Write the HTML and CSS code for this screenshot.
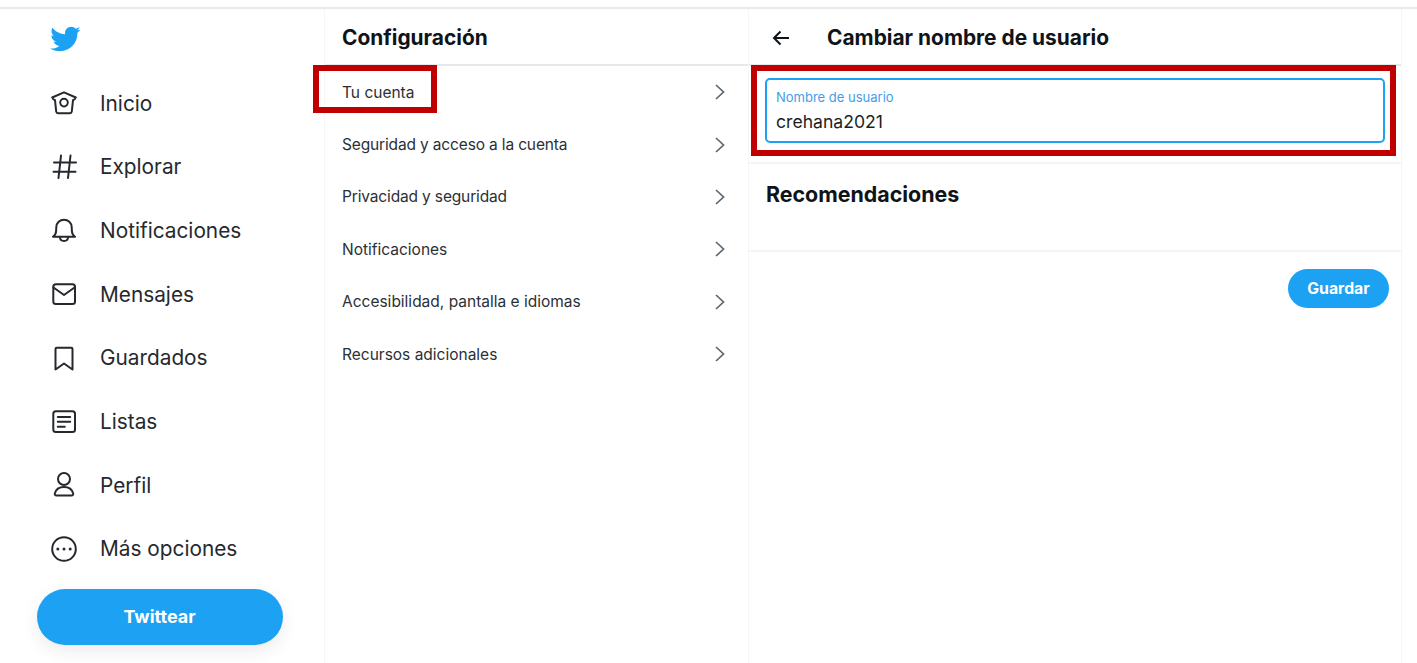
FILE: index.html
```html
<!DOCTYPE html>
<html lang="es">
<head>
<meta charset="utf-8">
<title>Cambiar nombre de usuario</title>
<link rel="stylesheet" href="styles.css">
</head>
<body>
<div class="topline"></div>
<div class="app">
  <aside class="sidebar">
    <svg class="bird" viewBox="0 0 24 24"><path d="M23.643 4.937c-.835.37-1.732.62-2.675.733.962-.576 1.7-1.49 2.048-2.578-.9.534-1.897.922-2.958 1.13-.85-.904-2.06-1.47-3.4-1.47-2.572 0-4.658 2.086-4.658 4.66 0 .364.042.718.12 1.06-3.873-.195-7.304-2.05-9.602-4.868-.4.69-.63 1.49-.63 2.342 0 1.616.823 3.043 2.072 3.878-.764-.025-1.482-.234-2.11-.583v.06c0 2.257 1.605 4.14 3.737 4.568-.392.106-.803.162-1.227.162-.3 0-.593-.028-.877-.082.593 1.85 2.313 3.198 4.352 3.234-1.595 1.25-3.604 1.995-5.786 1.995-.376 0-.747-.022-1.112-.065 2.062 1.323 4.51 2.093 7.14 2.093 8.57 0 13.255-7.098 13.255-13.254 0-.2-.005-.402-.014-.602.91-.658 1.7-1.477 2.323-2.41z"/></svg>
    <nav class="nav">
      <a class="nav-item"><svg class="icon" viewBox="0 0 26 26"><path d="M13 2.300 24.800 7.500c-.5 1.300-1.400 2.300-2.800 2.700L20.800 21.500c-.1 1-.8 1.700-1.800 1.700H7c-1 0-1.700-.7-1.800-1.700L4 10.200C2.600 9.800 1.700 8.800 1.200 7.500z"/><circle cx="13" cy="12.600" r="3.800"/></svg><span>Inicio</span></a>
      <a class="nav-item"><svg class="icon" viewBox="0 0 26 26"><path d="M3 8.500h22M2.500 17.700h22M10 1.500 7.500 24M19.500 1.500 17 24"/></svg><span>Explorar</span></a>
      <a class="nav-item"><svg class="icon" viewBox="0 0 26 26"><path d="M2 18.800c1.800-1.300 3-3.200 3.100-5.800l.2-3.800C5.500 4.800 8.800 1.800 13 1.800s7.500 3 7.700 7.400l.2 3.800c.1 2.600 1.300 4.500 3.100 5.800z"/><path d="M8.800 19c.2 2.400 2 4 4.200 4s4-1.600 4.200-4"/></svg><span>Notificaciones</span></a>
      <a class="nav-item"><svg class="icon" viewBox="0 0 26 26"><rect x="2.300" y="3.300" width="21.700" height="19.700" rx="2.500"/><path d="M2.500 6.500 13 14l10.500-7.500"/></svg><span>Mensajes</span></a>
      <a class="nav-item"><svg class="icon" viewBox="0 0 26 26"><path d="M4.500 24.500V4c0-.8.6-1.300 1.300-1.300h14.400c.7 0 1.300.5 1.300 1.300v20.500L13 18.500z"/></svg><span>Guardados</span></a>
      <a class="nav-item"><svg class="icon" viewBox="0 0 26 26"><rect x="2.300" y="2.300" width="21.700" height="20.700" rx="2.500"/><path d="M6.800 8h12.400M6.800 12.700h12.400M6.800 17.700h7"/></svg><span>Listas</span></a>
      <a class="nav-item"><svg class="icon" viewBox="0 0 26 26"><ellipse cx="13" cy="7" rx="6" ry="6"/><path d="M5.500 23.500c-1.300 0-2-1-1.700-2C4.800 17.500 8.500 15 13 15s8.200 2.500 9.200 6.500c.3 1-.4 2-1.700 2z"/></svg><span>Perfil</span></a>
      <a class="nav-item"><svg class="icon" viewBox="0 0 26 26"><circle cx="13" cy="13" r="11.800"/><circle class="dot" cx="6.800" cy="13" r="1.500"/><circle class="dot" cx="13" cy="13" r="1.500"/><circle class="dot" cx="19.200" cy="13" r="1.500"/></svg><span>Más opciones</span></a>
    </nav>
    <button class="tweet">Twittear</button>
  </aside>

  <section class="settings">
    <header class="col-head"><h2>Configuración</h2></header>
    <ul class="menu">
      <li class="menu-item"><span>Tu cuenta</span><svg class="chev" viewBox="0 0 12 16"><path d="M2 1l7.500 7L2 15"/></svg></li>
      <li class="menu-item"><span class="tight">Seguridad y acceso a la cuenta</span><svg class="chev" viewBox="0 0 12 16"><path d="M2 1l7.500 7L2 15"/></svg></li>
      <li class="menu-item"><span class="tight">Privacidad y seguridad</span><svg class="chev" viewBox="0 0 12 16"><path d="M2 1l7.500 7L2 15"/></svg></li>
      <li class="menu-item"><span>Notificaciones</span><svg class="chev" viewBox="0 0 12 16"><path d="M2 1l7.500 7L2 15"/></svg></li>
      <li class="menu-item"><span>Accesibilidad, pantalla e idiomas</span><svg class="chev" viewBox="0 0 12 16"><path d="M2 1l7.500 7L2 15"/></svg></li>
      <li class="menu-item"><span>Recursos adicionales</span><svg class="chev" viewBox="0 0 12 16"><path d="M2 1l7.500 7L2 15"/></svg></li>
    </ul>
    <div class="mark mark-account"></div>
  </section>

  <section class="detail">
    <header class="col-head detail-head">
      <svg class="back" viewBox="0 0 18 16"><path d="M17 8H2M8.500 1.500 2 8l6.500 6.500"/></svg>
      <h2>Cambiar nombre de usuario</h2>
    </header>
    <div class="field-wrap">
      <div class="field">
        <div class="field-label">Nombre de usuario</div>
        <div class="field-value">crehana2021</div>
      </div>
    </div>
    <div class="tips"><h3>Recomendaciones</h3></div>
    <div class="actions"><button class="save">Guardar</button></div>
    <div class="mark mark-field"></div>
  </section>
</div>
</body>
</html>
```
FILE: styles.css
```css
* { box-sizing: border-box; }
html, body { margin: 0; height: 663px; overflow: hidden; background: #fff; }
body { font-family: Inter, "Liberation Sans", sans-serif; color: #0f1419; }
.topline { height: 9px; border-bottom: 2px solid #e8eaec; }
.app { display: flex; height: 654px; }

.sidebar { width: 325px; flex: none; border-right: 1px solid #f4f6f7; padding: 14px 41px 0 36.500px; display: flex; flex-direction: column; }
.bird { width: 32px; height: 32px; margin-left: 12px; fill: #1da1f2; display: block; }
.nav { display: flex; flex-direction: column; margin-top: 16.500px; }
.nav-item { height: 63.650px; display: flex; align-items: center; gap: 23px; padding-left: 14.500px; font-size: 20.800px; color: #25292e; }
.icon { width: 26px; height: 26px; fill: none; stroke: #25292e; stroke-width: 2; stroke-linejoin: round; stroke-linecap: round; flex: none; }
.icon .dot { fill: #25292e; stroke: none; }
.tweet { margin-top: 8px; width: 246px; height: 56px; border: 0; border-radius: 28px; background: #1da1f2; color: #fff; font: 700 18px Inter, "Liberation Sans", sans-serif; box-shadow: 0 6px 18px rgba(0,0,0,.08); }

.settings { width: 424px; flex: none; border-right: 1px solid #f4f6f7; position: relative; }
.col-head { height: 57px; border-bottom: 2px solid #e6e9ec; display: flex; align-items: center; padding: 2px 0 0 17px; }
.col-head h2 { margin: 0; font-size: 20.900px; font-weight: 700; color: #0f1419; }
.menu { list-style: none; margin: 0; padding: 0; }
.menu-item { height: 52.400px; display: flex; align-items: center; justify-content: space-between; padding: 0 22px 0 17px; font-size: 15.500px; color: #2b3036; }
.tight { letter-spacing: -.15px; }
.chev { width: 12px; height: 16px; fill: none; stroke: #5b6670; stroke-width: 1.700; }

.detail { width: 653px; flex: none; border-right: 1px solid #f4f6f7; position: relative; }
.detail-head { padding-left: 23px; gap: 37px; }
.back { width: 18px; height: 16px; fill: none; stroke: #0f1419; stroke-width: 2; }
.field-wrap { padding: 12px 16px 19px; border-bottom: 2px solid #f2f4f5; }
.field { height: 65px; border: 2px solid #1da1f2; border-radius: 5px; padding: 9px 9px 0; }
.field-label { font-size: 13px; line-height: 16px; color: #3f9eea; }
.field-value { font-size: 17.600px; line-height: 24px; margin-top: 5px; color: #1b1f24; }
.tips { height: 88px; padding: 16px 17px 0; border-bottom: 2px solid #f2f4f5; }
.tips h3 { margin: 0; font-size: 21.400px; line-height: 28px; font-weight: 700; color: #0f1419; }
.actions { display: flex; justify-content: flex-end; padding: 17px 12px 0 0; }
.save { width: 101px; height: 39px; border: 0; border-radius: 20px; background: #1da1f2; color: #fff; font: 700 15.800px Inter, "Liberation Sans", sans-serif; }

.mark { position: absolute; border: 6px solid #c00000; }
.mark-account { left: -12px; top: 56px; width: 124px; height: 48px; }
.mark-field { left: 2px; top: 56px; width: 645px; height: 91px; }
```
